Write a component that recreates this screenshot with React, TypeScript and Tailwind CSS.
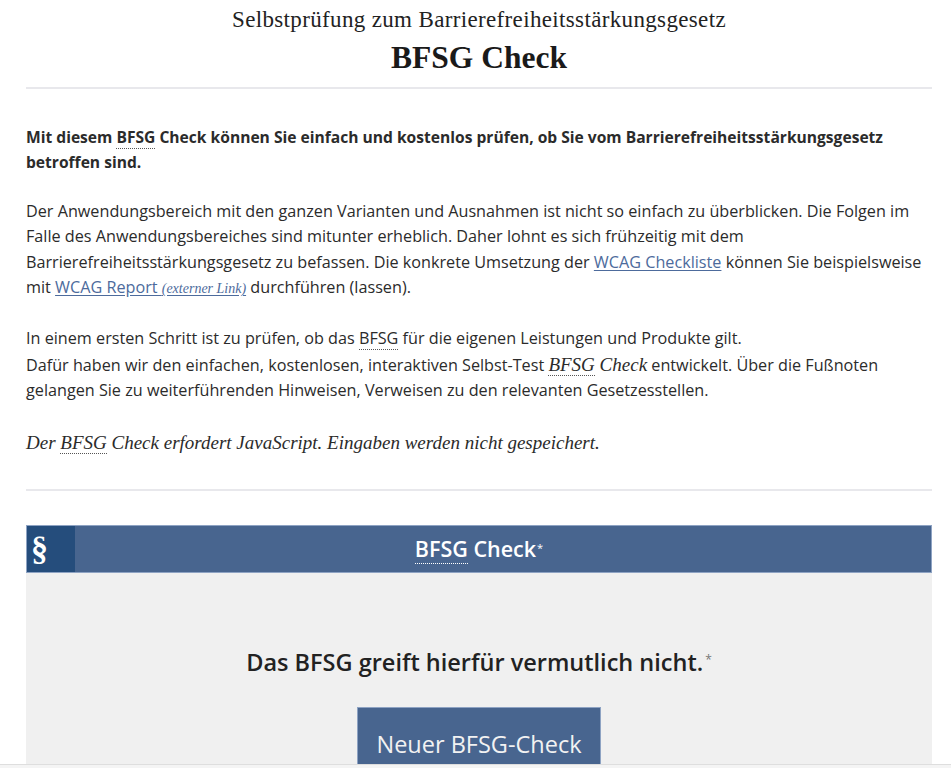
import React from "react";

const sans = "font-['Open_Sans','Noto_Sans',sans-serif]";
const serif = "font-['Liberation_Serif','DejaVu_Serif',serif]";

function Abbr({ children }: { children: React.ReactNode }) {
  return (
    <abbr className="no-underline border-b border-dotted border-[#555]" title="Barrierefreiheitsstärkungsgesetz">
      {children}
    </abbr>
  );
}

export default function App() {
  return (
    <div className={`bg-white min-h-[768px] text-[#2b2b2b] ${sans}`}>
      <div className="ml-[26px] w-[906px]">
        <header className="text-center pt-[6px] pb-[9px]">
          <div className={`${serif} text-[23px] tracking-[0.35px] leading-[28px] text-[#222]`}>
            Selbstprüfung zum Barrierefreiheitsstärkungsgesetz
          </div>
          <h1 className={`${serif} text-[31.5px] leading-[40px] font-bold text-[#1a1a1a] mt-[4px]`}>BFSG Check</h1>
        </header>
        <hr className="border-0 h-[2px] bg-[#e8e8ec]" />

        <div className="text-[16.2px] leading-[25.4px]">
          <p className="font-bold text-[15.6px] mt-[36px] pr-[30px]">
            Mit diesem <Abbr>BFSG</Abbr> Check können Sie einfach und kostenlos prüfen, ob Sie vom Barrierefreiheitsstärkungsgesetz betroffen sind.
          </p>
          <p className="mt-[23px]">
            Der Anwendungsbereich mit den ganzen Varianten und Ausnahmen ist nicht so einfach zu überblicken. Die Folgen im Falle des Anwendungsbereiches sind mitunter erheblich. Daher lohnt es sich frühzeitig mit dem Barrierefreiheitsstärkungsgesetz zu befassen. Die konkrete Umsetzung der{" "}
            <a href="#" className="text-[#4d6b9c] underline underline-offset-2">WCAG Checkliste</a> können Sie beispielsweise mit{" "}
            <a href="#" className="text-[#4d6b9c] underline underline-offset-2">
              WCAG Report <span className={`${serif} italic text-[14px]`}>(externer Link)</span>
            </a>{" "}
            durchführen (lassen).
          </p>
          <p className="mt-[25px]">
            In einem ersten Schritt ist zu prüfen, ob das <Abbr>BFSG</Abbr> für die eigenen Leistungen und Produkte gilt.
            <br />
            Dafür haben wir den einfachen, kostenlosen, interaktiven Selbst-Test{" "}
            <span className={`${serif} italic text-[19px]`}>
              <Abbr>BFSG</Abbr> Check
            </span>{" "}
            entwickelt. Über die Fußnoten gelangen Sie zu weiterführenden Hinweisen, Verweisen zu den relevanten Gesetzesstellen.
          </p>
          <p className={`${serif} italic text-[19px] leading-[26px] mt-[26px]`}>
            Der <Abbr>BFSG</Abbr> Check erfordert JavaScript. Eingaben werden nicht gespeichert.
          </p>
        </div>

        <hr className="border-0 h-[2px] bg-[#e8e8ec] mt-[33px]" />

        <section className="mt-[34px] bg-[#f0f0f0]">
          <div className="relative h-[48px] bg-[#48658f] border border-[#8ea3c3] flex items-center justify-center">
            <div className="absolute left-0 top-0 bottom-0 w-[48px] bg-[#254d7c] flex items-center pl-[4px]">
              <span className={`${serif} text-white text-[34px] leading-none font-bold`}>§</span>
            </div>
            <span className="text-white text-[21.5px] font-semibold">
              <abbr className="no-underline border-b border-dotted border-white">BFSG</abbr> Check
              <sup className="text-[11px] font-normal ml-[1px] relative -top-[5px]">*</sup>
            </span>
          </div>
          <div className="flex flex-col items-center pt-[73px] pb-[40px]">
            <h2 className="text-[23.5px] font-semibold text-[#222] leading-[32px]">
              Das BFSG greift hierfür vermutlich nicht.
              <sup className="text-[12px] font-normal text-[#777] ml-[2px] relative -top-[7px]">*</sup>
            </h2>
            <button className="mt-[29px] w-[244px] h-[72px] pt-[3px] bg-[#48658f] border border-[#8ea3c3] text-[#f2f2f2] text-[23.5px] font-medium">
              Neuer BFSG-Check
            </button>
          </div>
        </section>
      </div>
      <div className="fixed left-0 right-0 bottom-0 h-[4px] bg-[#f4f4f4] border-t border-[#dedede]" />
    </div>
  );
}
